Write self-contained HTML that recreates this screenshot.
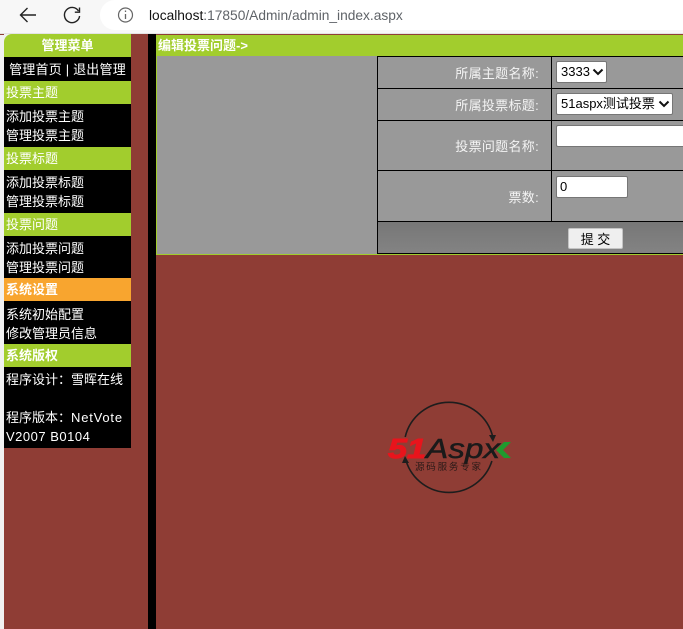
<!DOCTYPE html>
<html lang="zh">
<head>
<meta charset="utf-8">
<title>admin_index</title>
<style>
html,body{margin:0;padding:0;width:683px;height:629px;overflow:hidden;background:#8f3d35;}
body{position:relative;font-family:"Liberation Sans","WenQuanYi Zen Hei","Noto Sans CJK SC",sans-serif;font-size:13px;color:#fff;}
.a{position:absolute;box-sizing:border-box;white-space:nowrap;}
.g{background:#a2cd2d;}
.k{background:#000;}
.hd{left:4px;width:127px;height:23px;line-height:23px;padding-left:2px;}
.b{font-weight:bold;}
.ln{left:6px;height:19px;line-height:19px;}
.r{text-align:right;left:378px;width:161px;color:#f4f4f4;letter-spacing:.3px;}
.ctl{background:#fff;border:1px solid #767676;border-radius:2px;color:#000;padding-left:4px;}
</style>
</head>
<body>
<!-- browser chrome -->
<div class="a" style="left:0;top:0;width:683px;height:34px;background:#f7f7f7;border-bottom:1px solid #e4e4e4;"></div>
<div class="a" style="left:100px;top:0;width:583px;height:30px;background:#fff;border-radius:15px 0 0 15px;"></div>
<svg class="a" style="left:0;top:0;" width="140" height="32" viewBox="0 0 140 32">
<path d="M36 15H20.5M27.5 8L20.5 15L27.5 22" fill="none" stroke="#222" stroke-width="1.4"/>
<path d="M78.5 11A7.6 7.6 0 1 0 79.6 16" fill="none" stroke="#222" stroke-width="1.4"/>
<path d="M79.5 7.5V12.2H74.8" fill="none" stroke="#222" stroke-width="1.4"/>
<circle cx="125.5" cy="15" r="7" fill="none" stroke="#666" stroke-width="1.2"/>
<path d="M125.5 14V19M125.5 10.5V12" stroke="#666" stroke-width="1.3"/>
</svg>
<div class="a" style="left:149px;top:7px;height:18px;line-height:18px;font-size:13.75px;color:#5f6368;"><span style="color:#111;">localhost</span>:17850/Admin/admin_index.aspx</div>

<!-- page -->
<div class="a" style="left:0;top:35px;width:4px;height:594px;background:#f1f1f1;"></div>
<div class="a k" style="left:148px;top:34px;width:8px;height:595px;"></div>

<!-- sidebar -->
<div class="a" style="left:4px;top:34px;width:8px;height:8px;background:#f1f1f1;"></div>
<div class="a g b" style="left:4px;top:34px;width:127px;height:23px;border-radius:8px 0 0 0;text-align:center;line-height:23px;">管理菜单</div>
<div class="a k" style="left:4px;top:57px;width:127px;height:391px;"></div>
<div class="a" style="left:4px;top:57px;width:127px;height:24px;line-height:26px;text-align:center;letter-spacing:.2px;">管理首页 | 退出管理</div>

<div class="a g hd" style="top:81px;">投票主题</div>
<div class="a ln" style="top:107px;">添加投票主题</div>
<div class="a ln" style="top:126px;">管理投票主题</div>

<div class="a g hd" style="top:147px;">投票标题</div>
<div class="a ln" style="top:173px;">添加投票标题</div>
<div class="a ln" style="top:192px;">管理投票标题</div>

<div class="a g hd" style="top:213px;">投票问题</div>
<div class="a ln" style="top:239px;">添加投票问题</div>
<div class="a ln" style="top:258px;">管理投票问题</div>

<div class="a hd b" style="top:278px;background:#f8a52f;">系统设置</div>
<div class="a ln" style="top:305px;">系统初始配置</div>
<div class="a ln" style="top:324px;">修改管理员信息</div>

<div class="a g hd b" style="top:344px;">系统版权</div>
<div class="a ln" style="top:370px;">程序设计：雪晖在线</div>
<div class="a ln" style="top:408px;">程序版本：<span style="letter-spacing:.8px;">NetVote</span></div>
<div class="a ln" style="top:427px;letter-spacing:.5px;">V2007 B0104</div>

<!-- main -->
<div class="a g b" style="left:156px;top:35px;width:527px;height:21px;line-height:22px;padding-left:2px;">编辑投票问题-&gt;</div>
<div class="a" style="left:156px;top:56px;width:527px;height:199px;background:#999;border-left:1px solid #a2cd2d;border-bottom:1px solid #a2cd2d;"></div>

<!-- table lines -->
<div class="a k" style="left:377px;top:56px;width:306px;height:1px;"></div>
<div class="a k" style="left:377px;top:88px;width:306px;height:1px;"></div>
<div class="a k" style="left:377px;top:120px;width:306px;height:1px;"></div>
<div class="a k" style="left:377px;top:170px;width:306px;height:1px;"></div>
<div class="a k" style="left:377px;top:221px;width:306px;height:1px;"></div>
<div class="a k" style="left:377px;top:253px;width:306px;height:1px;"></div>
<div class="a k" style="left:377px;top:56px;width:1px;height:198px;"></div>
<div class="a k" style="left:551px;top:56px;width:1px;height:166px;"></div>
<div class="a" style="left:378px;top:222px;width:305px;height:31px;background:linear-gradient(#777,#838383);"></div>

<div class="a r" style="top:64px;line-height:19px;">所属主题名称:</div>
<div class="a r" style="top:96px;line-height:19px;">所属投票标题:</div>
<div class="a r" style="top:137px;line-height:19px;">投票问题名称:</div>
<div class="a r" style="top:188px;line-height:19px;">票数:</div>

<div class="a ctl" style="left:556px;top:61px;width:51px;height:22px;line-height:20px;">3333</div>
<svg class="a" style="left:592px;top:68px;" width="12" height="8"><path d="M1.5 1.5L6 6L10.5 1.5" fill="none" stroke="#111" stroke-width="2"/></svg>
<div class="a ctl" style="left:556px;top:93px;width:117px;height:22px;line-height:20px;">51aspx测试投票</div>
<svg class="a" style="left:658px;top:100px;" width="12" height="8"><path d="M1.5 1.5L6 6L10.5 1.5" fill="none" stroke="#111" stroke-width="2"/></svg>
<div class="a" style="left:556px;top:125px;width:127px;height:22px;background:#fff;border:1px solid #767676;border-right:0;border-radius:2px 0 0 2px;"></div>
<div class="a ctl" style="left:556px;top:176px;width:72px;height:22px;line-height:20px;padding-left:3px;">0</div>
<div class="a" style="left:568px;top:228px;width:55px;height:21px;background:#efefef;border:1px solid #c4c4c4;border-radius:2px;color:#000;text-align:center;line-height:21px;">提 交</div>

<!-- logo -->
<svg class="a" style="left:380px;top:395px;" width="140" height="105" viewBox="0 0 140 105">
<path d="M25.2 42A45 45 0 0 1 112.8 42" fill="none" stroke="#1d1d1d" stroke-width="1.6"/>
<path d="M109 40L116 40L113 47Z" fill="#1d1d1d"/>
<path d="M111.9 66A45 45 0 0 1 26.1 66" fill="none" stroke="#1d1d1d" stroke-width="1.6"/>
<path d="M22 68L29 68L25 61Z" fill="#1d1d1d"/>
<text x="8" y="63" font-family="'Liberation Sans',sans-serif" font-size="28" font-weight="bold" font-style="italic" fill="#e8141c" stroke="#e8141c" stroke-width="1" textLength="38" lengthAdjust="spacingAndGlyphs">51</text>
<text x="46" y="63" font-family="'Liberation Sans',sans-serif" font-size="28" font-style="italic" fill="#1a1a1a" stroke="#1a1a1a" stroke-width=".5" textLength="74" lengthAdjust="spacingAndGlyphs">Aspx</text>
<path d="M131 47L124 47L116 55L124 63L131 63L123 55Z" fill="#1f9a2e"/>
<text x="35" y="75" font-family="'WenQuanYi Zen Hei','Noto Sans CJK SC',sans-serif" font-size="9.5" fill="#2a1a18" textLength="66">源码服务专家</text>
</svg>
</body>
</html>
